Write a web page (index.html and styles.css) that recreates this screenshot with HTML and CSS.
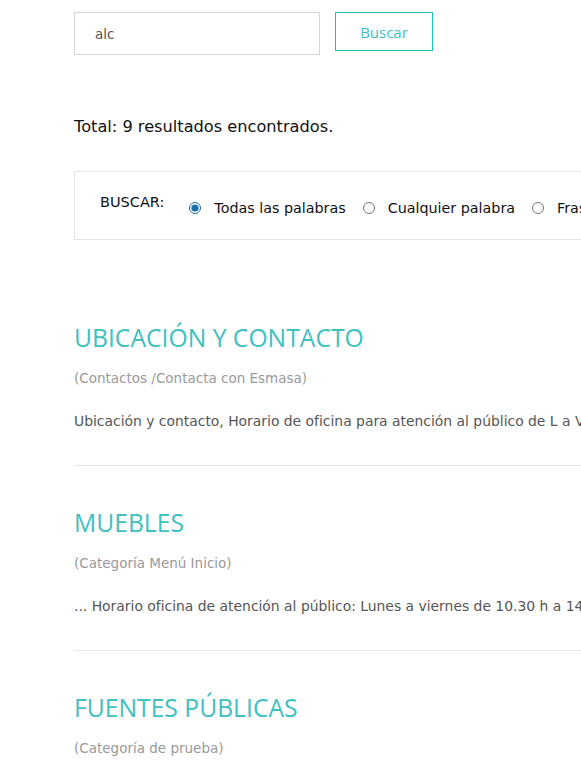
FILE: index.html
```html
<!DOCTYPE html>
<html lang="es">
<head>
    <meta charset="UTF-8">
    <meta name="viewport" content="width=device-width, initial-scale=1.0">
    <title>Buscar</title>
    <link rel="stylesheet" href="styles.css">
</head>
<body>

    <div class="container">
        <form class="search-form">
            <input type="text" class="search-input" name="q" value="alc">
            <button type="submit" class="search-button">Buscar</button>
        </form>

        <p class="total">Total: 9 resultados encontrados.</p>

        <div class="search-options">
            <span class="options-label">BUSCAR:</span>
            <label class="option"><input type="radio" name="modo" checked> Todas las palabras</label>
            <label class="option"><input type="radio" name="modo"> Cualquier palabra</label>
            <label class="option"><input type="radio" name="modo"> Frase exacta</label>
        </div>

        <div class="results">
            <div class="result">
                <h3 class="result-title">UBICACIÓN Y CONTACTO</h3>
                <p class="result-category">(Contactos /Contacta con Esmasa)</p>
                <p class="result-text">Ubicación y contacto, Horario de oficina para atención al público de L a V de 10.30 h a 14.00 h</p>
            </div>

            <div class="result">
                <h3 class="result-title">MUEBLES</h3>
                <p class="result-category">(Categoría Menú Inicio)</p>
                <p class="result-text">... Horario oficina de atención al público: Lunes a viernes de 10.30 h a 14.00 h</p>
            </div>

            <div class="result">
                <h3 class="result-title">FUENTES PÚBLICAS</h3>
                <p class="result-category">(Categoría de prueba)</p>
                <p class="result-text">... fuentes públicas de agua potable en el municipio</p>
            </div>
        </div>
    </div>

</body>
</html>
```

FILE: styles.css
```css
* {
    margin: 0;
    padding: 0;
    box-sizing: border-box;
}

html, body {
    overflow: hidden;
}

body {
    font-family: "DejaVu Sans", Verdana, sans-serif;
    background-color: #fff;
    color: #222;
}

.container {
    width: 1000px;
    padding: 12px 0 0 74px;
}

.search-form {
    display: flex;
    align-items: flex-start;
    gap: 15px;
}

.search-input {
    width: 246px;
    height: 43px;
    padding: 0 20px;
    border: 1px solid #d6d6d6;
    font-family: "DejaVu Sans", Verdana, sans-serif;
    font-size: 13.5px;
    color: #555;
}

.search-button {
    width: 98px;
    height: 39px;
    border: 1px solid #1fbfb8;
    background-color: #fff;
    color: #3fc0c0;
    font-family: "Open Sans", sans-serif;
    font-size: 15px;
    cursor: pointer;
}

.total {
    margin-top: 62px;
    font-size: 16.2px;
    color: #111;
}

.search-options {
    display: flex;
    align-items: flex-start;
    margin-top: 35px;
    height: 69px;
    padding: 22px 0 0 25px;
    border: 1px solid #e3e3e3;
    border-right: none;
}

.options-label {
    font-size: 14.5px;
    color: #111;
    margin-right: 25px;
}

.option {
    display: flex;
    align-items: center;
    gap: 13px;
    margin-top: 6px;
    margin-right: 17px;
    font-size: 14.3px;
    color: #111;
}

.option input {
    width: 12px;
    height: 12px;
    margin: 0;
    accent-color: #1a6fa8;
}

.results {
    margin-top: 82px;
}

.result {
    padding-bottom: 36px;
    border-bottom: 1px solid #e5e5e5;
    margin-bottom: 41px;
}

.result-title {
    font-family: "Open Sans", sans-serif;
    font-weight: 400;
    font-size: 24.7px;
    color: #40c0c0;
    line-height: 32px;
}

.result-category {
    margin-top: 16px;
    font-size: 13.5px;
    color: #999;
}

.result-text {
    margin-top: 27px;
    font-size: 13.9px;
    color: #555;
}
```
